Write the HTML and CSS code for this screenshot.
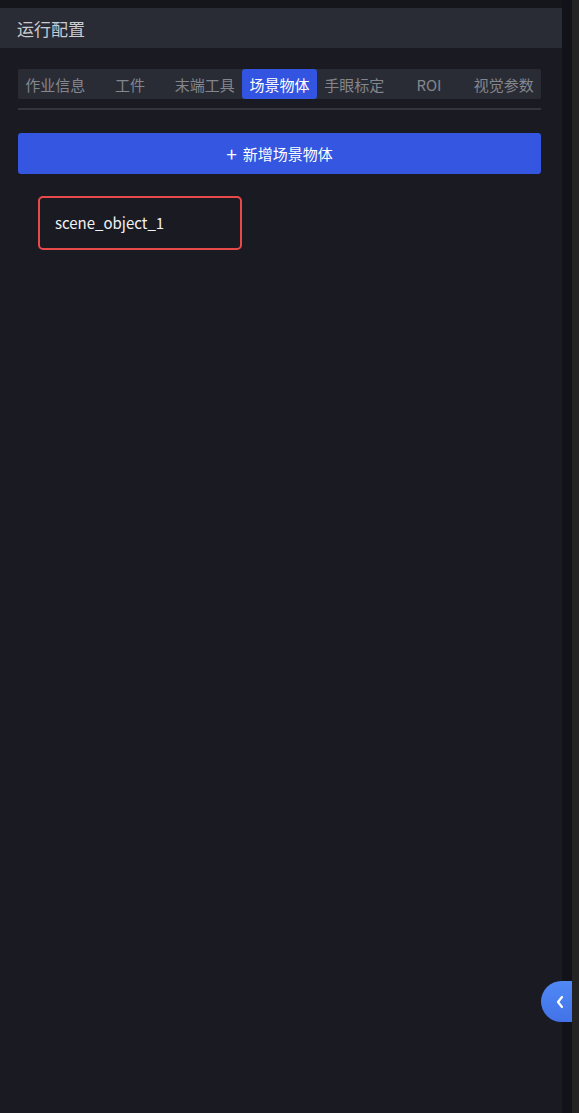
FILE: index.html
```html
<!DOCTYPE html>
<html>
<head>
  <meta charset="UTF-8">
  <title>运行配置</title>
  <link rel="stylesheet" href="styles.css">
</head>
<body>
  <div class="layout">
    <div class="panel">
      <div class="panel-header">运行配置</div>
      <div class="panel-body">
        <div class="tabs">
          <span class="tab">作业信息</span>
          <span class="tab">工件</span>
          <span class="tab">末端工具</span>
          <span class="tab active">场景物体</span>
          <span class="tab">手眼标定</span>
          <span class="tab">ROI</span>
          <span class="tab">视觉参数</span>
        </div>
        <div class="divider"></div>
        <button class="add-btn"><span class="plus">+</span>新增场景物体</button>
        <div class="object-list">
          <div class="object-item">scene_object_1</div>
        </div>
      </div>
    </div>
    <div class="side-gap">
      <div class="collapse-btn">
        <svg width="10" height="14" viewBox="0 0 10 14"><path d="M7 2 L3 7 L7 12" fill="none" stroke="#fff" stroke-width="2.2" stroke-linecap="round" stroke-linejoin="round"/></svg>
      </div>
    </div>
    <div class="side-edge"></div>
  </div>
</body>
</html>
```

FILE: styles.css
```css
body {
  margin: 0;
  height: 1113px;
  background-color: #15161c;
  font-family: "Noto Sans CJK SC", "Noto Sans", sans-serif;
  overflow: hidden;
}
.layout {
  display: flex;
  height: 100%;
}
.panel {
  width: 562px;
  margin-top: 8px;
  background-color: #1a1b22;
  display: flex;
  flex-direction: column;
}
.panel-header {
  height: 40px;
  line-height: 42px;
  padding-left: 17px;
  background-color: #2a2c35;
  color: #c9cbd0;
  font-size: 17px;
}
.panel-body {
  padding: 21px 21px 0 18px;
}
.tabs {
  display: flex;
  height: 30px;
  background-color: #2a2c35;
  border-radius: 2px;
  overflow: hidden;
}
.tab {
  flex: 1;
  display: flex;
  align-items: center;
  justify-content: center;
  color: #84868d;
  font-size: 15px;
  white-space: nowrap;
}
.tab.active {
  background-color: #3354e0;
  color: #ffffff;
  border-radius: 3px;
}
.divider {
  height: 2px;
  margin-top: 9px;
  background-color: #33353e;
}
.add-btn {
  display: flex;
  align-items: center;
  justify-content: center;
  width: 100%;
  height: 41px;
  margin-top: 23px;
  border: none;
  border-radius: 3px;
  background-color: #3456e0;
  color: #ffffff;
  font-family: inherit;
  font-size: 15px;
}
.plus {
  font-size: 19px;
  line-height: 1;
  margin-right: 6px;
}
.object-list {
  padding: 22px 0 0 20px;
}
.object-item {
  width: 185px;
  height: 50px;
  line-height: 50px;
  padding-left: 15px;
  border: 2px solid #e84a4a;
  border-radius: 5px;
  color: #f2f2f4;
  font-size: 15px;
}
.side-gap {
  width: 10px;
  background-color: #121318;
  position: relative;
}
.collapse-btn {
  position: absolute;
  right: 0;
  top: 981px;
  width: 31px;
  height: 41px;
  border-radius: 21px 0 0 21px;
  background: linear-gradient(180deg, #5089f5, #4272e8);
  display: flex;
  align-items: center;
  justify-content: center;
  padding-left: 6px;
  box-sizing: border-box;
}
.side-edge {
  width: 7px;
  background-color: #242424;
}
```
